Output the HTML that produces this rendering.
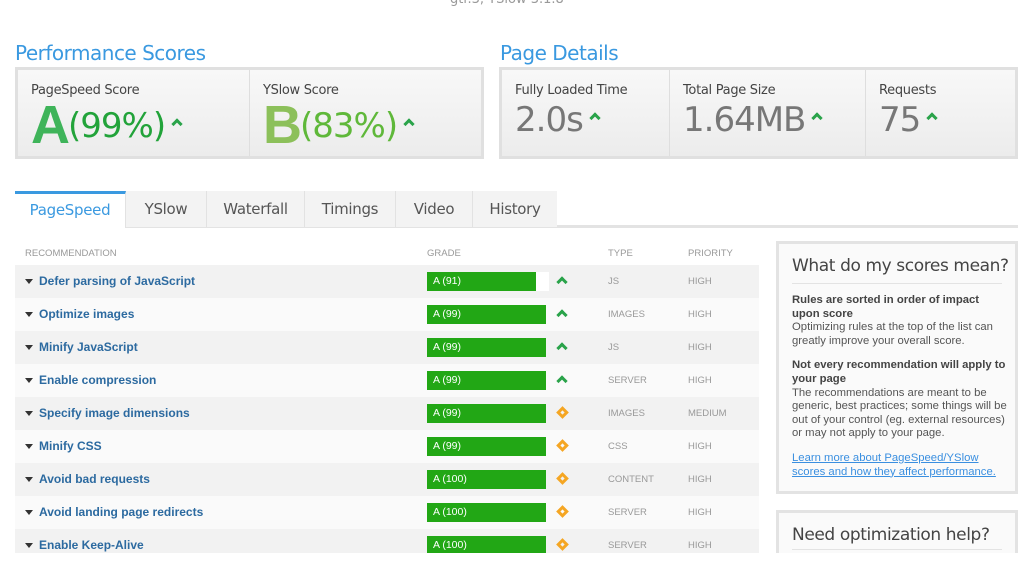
<!DOCTYPE html>
<html><head><meta charset="utf-8"><style>
*{margin:0;padding:0;box-sizing:border-box}
html,body{width:1024px;height:561px;overflow:hidden}
body{background:#fff;font-family:"DejaVu Sans","Liberation Sans",sans-serif;position:relative;color:#555}
.abs{position:absolute}
.h2{font-size:20px;color:#3a99e0;letter-spacing:-0.5px}
.box{border:3px solid #e0e0e0;background:linear-gradient(#f8f8f8,#ececec);}
.cell{position:absolute;top:0;bottom:0;border-right:1px solid #dedede}
.lbl{position:absolute;top:13px;left:13px;font-size:13px;color:#444;letter-spacing:-0.3px}
.big{position:absolute;top:30px;left:13px;font-size:34px;color:#777;letter-spacing:-1px;white-space:nowrap}
.car{display:inline-block;width:8px;height:8px;border-left:3px solid #2aa34a;border-top:3px solid #2aa34a;transform:rotate(45deg);vertical-align:middle;margin-left:8px;position:relative;top:-4px}
.tab{position:absolute;top:191px;height:36px;background:#f3f3f3;border-right:1px solid #e2e2e2;font-size:15px;color:#555;text-align:center;line-height:36px;letter-spacing:-0.3px}
.row{position:absolute;left:15px;width:744px;height:33px}
.row .n{position:absolute;left:24px;top:9px;font-family:"Liberation Sans",sans-serif;font-weight:bold;font-size:12px;color:#2c6aa0}
.row .tri{position:absolute;left:10px;top:14px;border-left:4px solid transparent;border-right:4px solid transparent;border-top:5px solid #333}
.row .g{position:absolute;left:412px;top:7px;height:19px;width:119px;background:#fff}
.row .g div{height:19px;background:#22a715;color:#fff;font-family:"Liberation Sans",sans-serif;font-size:10.5px;line-height:19px;padding-left:6px}
.row .t,.row .p{position:absolute;top:11px;font-family:"Liberation Sans",sans-serif;font-size:9.5px;color:#999}
.row .t{left:593px}.row .p{left:673px}
.up{position:absolute;left:543px;top:13px;width:8px;height:8px;border-left:3px solid #2aa34a;border-top:3px solid #2aa34a;transform:rotate(45deg)}
.dia{position:absolute;left:543px;top:11px;width:9px;height:9px;border:3px solid #f5a623;transform:rotate(45deg)}
.side{font-family:"Liberation Sans",sans-serif;font-size:11.3px;color:#555;line-height:13.6px}
</style></head><body>
<div class="abs" style="top:-8px;left:450px;font-size:13px;color:#999">gtr.3, YSlow 3.1.8</div>

<div class="abs h2" style="left:15px;top:41px">Performance Scores</div>
<div class="abs box" style="left:15px;top:67px;width:469px;height:92px">
 <div class="cell" style="left:0;width:232px"><div class="lbl">PageSpeed Score</div>
  <div class="big" style="top:24px;color:#22a33a"><span style="font-size:54px;font-weight:bold;color:#3fb45a;font-family:'Liberation Sans',sans-serif;letter-spacing:-2px">A</span><span style="position:relative;top:-6px">(99%)</span><span class="car" style="top:-10px"></span></div></div>
 <div class="cell" style="left:232px;width:234px;border:none"><div class="lbl">YSlow Score</div>
  <div class="big" style="top:24px;color:#5fb83a"><span style="font-size:54px;font-weight:bold;color:#8cc05a;font-family:'Liberation Sans',sans-serif;letter-spacing:-2px">B</span><span style="position:relative;top:-6px">(83%)</span><span class="car" style="top:-10px"></span></div></div>
</div>

<div class="abs h2" style="left:500px;top:41px">Page Details</div>
<div class="abs box" style="left:499px;top:67px;width:519px;height:92px">
 <div class="cell" style="left:0;width:168px"><div class="lbl">Fully Loaded Time</div><div class="big">2.0s<span class="car"></span></div></div>
 <div class="cell" style="left:168px;width:196px"><div class="lbl">Total Page Size</div><div class="big">1.64MB<span class="car"></span></div></div>
 <div class="cell" style="left:364px;width:152px;border:none"><div class="lbl">Requests</div><div class="big">75<span class="car"></span></div></div>
</div>

<div class="abs" style="left:15px;top:225px;width:1003px;height:3px;background:#e3e3e3"></div>
<div class="tab" style="left:15px;width:111px;background:#fff;border-top:3px solid #3a99e0;line-height:33px;color:#3a99e0;height:37px">PageSpeed</div>
<div class="tab" style="left:126px;width:81px">YSlow</div>
<div class="tab" style="left:207px;width:98px">Waterfall</div>
<div class="tab" style="left:305px;width:91px">Timings</div>
<div class="tab" style="left:396px;width:77px">Video</div>
<div class="tab" style="left:473px;width:84px;border:none">History</div>

<div class="abs" style="left:25px;top:248px;font-family:'Liberation Sans',sans-serif;font-size:9.5px;color:#999">RECOMMENDATION</div>
<div class="abs" style="left:427px;top:248px;font-family:'Liberation Sans',sans-serif;font-size:9.5px;color:#999">GRADE</div>
<div class="abs" style="left:608px;top:248px;font-family:'Liberation Sans',sans-serif;font-size:9.5px;color:#999">TYPE</div>
<div class="abs" style="left:688px;top:248px;font-family:'Liberation Sans',sans-serif;font-size:9.5px;color:#999">PRIORITY</div>

<div class="row" style="top:265px;background:#f2f2f2"><i class="tri"></i><span class="n">Defer parsing of JavaScript</span><div class="g" style="width:122px"><div style="width:109px">A (91)</div></div><i class="up"></i><span class="t">JS</span><span class="p">HIGH</span></div>
<div class="row" style="top:298px;background:#fafafa"><i class="tri"></i><span class="n">Optimize images</span><div class="g"><div>A (99)</div></div><i class="up"></i><span class="t">IMAGES</span><span class="p">HIGH</span></div>
<div class="row" style="top:331px;background:#f2f2f2"><i class="tri"></i><span class="n">Minify JavaScript</span><div class="g"><div>A (99)</div></div><i class="up"></i><span class="t">JS</span><span class="p">HIGH</span></div>
<div class="row" style="top:364px;background:#fafafa"><i class="tri"></i><span class="n">Enable compression</span><div class="g"><div>A (99)</div></div><i class="up"></i><span class="t">SERVER</span><span class="p">HIGH</span></div>
<div class="row" style="top:397px;background:#f2f2f2"><i class="tri"></i><span class="n">Specify image dimensions</span><div class="g"><div>A (99)</div></div><i class="dia"></i><span class="t">IMAGES</span><span class="p">MEDIUM</span></div>
<div class="row" style="top:430px;background:#fafafa"><i class="tri"></i><span class="n">Minify CSS</span><div class="g"><div>A (99)</div></div><i class="dia"></i><span class="t">CSS</span><span class="p">HIGH</span></div>
<div class="row" style="top:463px;background:#f2f2f2"><i class="tri"></i><span class="n">Avoid bad requests</span><div class="g"><div>A (100)</div></div><i class="dia"></i><span class="t">CONTENT</span><span class="p">HIGH</span></div>
<div class="row" style="top:496px;background:#fafafa"><i class="tri"></i><span class="n">Avoid landing page redirects</span><div class="g"><div>A (100)</div></div><i class="dia"></i><span class="t">SERVER</span><span class="p">HIGH</span></div>
<div class="row" style="top:529px;background:#f2f2f2;height:24px"><i class="tri"></i><span class="n">Enable Keep-Alive</span><div class="g"><div>A (100)</div></div><i class="dia"></i><span class="t">SERVER</span><span class="p">HIGH</span></div>

<div class="abs" style="left:776px;top:241px;width:242px;height:253px;border:3px solid #e3e3e3;background:#fafafa">
 <div style="position:absolute;left:13px;top:12px;font-size:17px;color:#444;letter-spacing:-0.4px;white-space:nowrap">What do my scores mean?</div>
 <div style="position:absolute;left:13px;top:39px;width:210px;height:1px;background:#e3e3e3"></div>
 <div class="side" style="position:absolute;left:13px;top:50px;width:215px">
  <b style="color:#444">Rules are sorted in order of impact upon score</b><br>Optimizing rules at the top of the list can greatly improve your overall score.
  <div style="height:11px"></div>
  <b style="color:#444">Not every recommendation will apply to your page</b><br>The recommendations are meant to be generic, best practices; some things will be out of your control (eg. external resources) or may not apply to your page.
  <div style="height:11px"></div>
  <a style="color:#3a8fe0;text-decoration:underline">Learn more about PageSpeed/YSlow scores and how they affect performance.</a>
 </div>
</div>
<div class="abs" style="left:776px;top:510px;width:242px;height:60px;border:3px solid #e3e3e3;background:#fafafa">
 <div style="position:absolute;left:13px;top:12px;font-size:17px;color:#444;letter-spacing:-0.4px;white-space:nowrap">Need optimization help?</div>
 <div style="position:absolute;left:13px;top:36px;width:210px;height:1px;background:#e3e3e3"></div>
</div>
<div class="abs" style="left:0;top:553px;width:1024px;height:20px;background:#fff"></div>
</body></html>
